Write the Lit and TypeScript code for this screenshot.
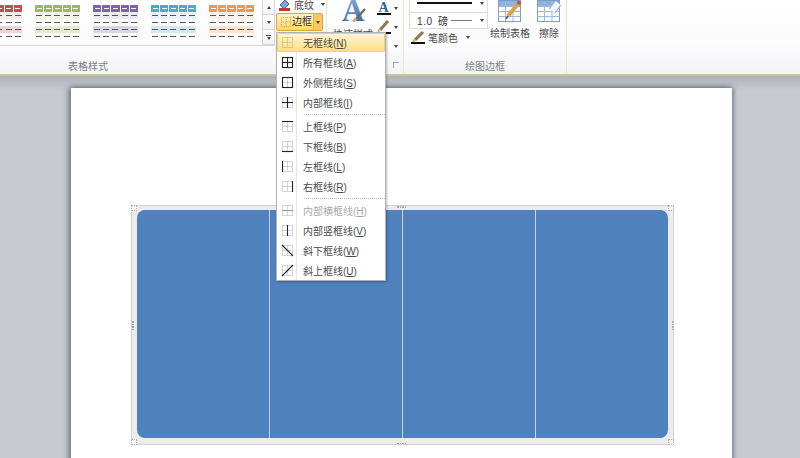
import { LitElement, html, css, svg } from "lit";
import { customElement } from "lit/decorators.js";

type Item = { label: string; key: string; lines: string[]; hot?: boolean; off?: boolean } | { sep: true };

const items: Item[] = [
  { label: "无框线", key: "N", lines: [], hot: true },
  { label: "所有框线", key: "A", lines: ["t", "b", "l", "r", "h", "v"] },
  { label: "外侧框线", key: "S", lines: ["t", "b", "l", "r"] },
  { label: "内部框线", key: "I", lines: ["h", "v"] },
  { sep: true },
  { label: "上框线", key: "P", lines: ["t"] },
  { label: "下框线", key: "B", lines: ["b"] },
  { label: "左框线", key: "L", lines: ["l"] },
  { label: "右框线", key: "R", lines: ["r"] },
  { sep: true },
  { label: "内部横框线", key: "H", lines: ["h"], off: true },
  { label: "内部竖框线", key: "V", lines: ["v"] },
  { label: "斜下框线", key: "W", lines: ["d"] },
  { label: "斜上框线", key: "U", lines: ["u"] },
];

const segs: Record<string, string> = {
  t: "M1 1.5H12", b: "M1 11.5H12", l: "M1.5 1V12", r: "M11.5 1V12",
  h: "M1 6.5H12", v: "M6.5 1V12", d: "M1 1L12 12", u: "M1 12L12 1",
};

const borderIcon = (lines: string[], faint: string, ink: string, size = 13) => svg`
  <svg width=${size} height=${size} viewBox="0 0 13 13" fill="none">
    <path d="M1.5 1.5H11.5V11.5H1.5ZM6.5 1.5V11.5M1.5 6.5H11.5" stroke=${faint} stroke-dasharray="1 1"/>
    ${lines.map((l) => svg`<path d=${segs[l]} stroke=${ink} stroke-width="1.1"/>`)}
  </svg>`;

const swatches = [
  { head: "#c0504d", band: "#ecd6d5", soft: "#f7ecec" },
  { head: "#9bbb59", band: "#e3ecd0", soft: "#f2f6e8" },
  { head: "#8064a2", band: "#dcd5e5", soft: "#eeeaf2" },
  { head: "#4bacc6", band: "#d3e9f0", soft: "#e9f4f8" },
  { head: "#f79646", band: "#fde3d0", soft: "#fef1e7" },
];

const tableIcon = (extra: unknown) => svg`
  <svg width="26" height="24" viewBox="0 0 26 24" fill="none">
    <rect x="1.5" y="1.5" width="22" height="21" fill="#fff" stroke="#7f9cbd"/>
    <rect x="2" y="2" width="21" height="5" fill="#8db3e2"/>
    <path d="M1.5 7.5H23.5M1.5 12.5H23.5M1.5 17.5H23.5M8.5 2V22M16 2V22" stroke="#a3b9d3"/>
    ${extra}
  </svg>`;

@customElement("app-root")
export class AppRoot extends LitElement {
  static styles = css`
    :host { display: block; width: 800px; height: 458px; overflow: hidden; position: relative;
      font-family: "Liberation Sans", "Noto Sans CJK SC", sans-serif; font-size: 10px; color: #4a4a4a; background: #c6c9ce; }
    .ribbon { display: flex; height: 74px; overflow: hidden; border-bottom: 2px solid #c6c99c;
      background: linear-gradient(#ffffff 0, #fbfbfc 45px, #f3f4f6 74px); }
    .group { display: flex; flex-direction: column; height: 74px; flex: none; border-right: 1px solid #e6e8cf; box-sizing: border-box; }
    .body { height: 59px; display: flex; flex: none; }
    .label { height: 15px; line-height: 15px; text-align: center; color: #7b7f86; }
    .g1 { width: 374px; margin-left: -99px; border-right: none; }
    .g1 .body { justify-content: flex-end; }
    .gallery { flex: none; height: 45px; border-bottom: 1px solid #d5d7db; width: 100%; display: flex; justify-content: flex-end; }
    .swatches { display: flex; gap: 13px; padding: 5px 8px 0 0; }
    .swatch { width: 45px; display: flex; flex-direction: column; }
    .cols { display: grid; grid-template-columns: repeat(5, 1fr); gap: 1px; }
    .head { display: flex; align-items: center; justify-content: center; height: 7px; }
    .head i { width: 5px; height: 1px; background: #fff; }
    .row { height: 7px; display: flex; align-items: center; justify-content: center; }
    .row i { width: 6px; height: 1.4px; background: #555; }
    .scroll { width: 11px; flex: none; display: flex; flex-direction: column; border-left: 1px solid #d5d7db; border-right: 1px solid #d5d7db; }
    .scroll div { flex: 1; border-bottom: 1px solid #d5d7db; display: flex; flex-direction: column; gap: 1px; align-items: center; justify-content: center; background: linear-gradient(#fff, #f1f2f4); }
    .scroll b { width: 5px; height: 1px; background: #444; }
    .tri { width: 0; height: 0; border-left: 2.5px solid transparent; border-right: 2.5px solid transparent; border-top: 3px solid #444; flex: none; }
    .tri.up { border-top: none; border-bottom: 3px solid #444; }
    .g2 { width: 52px; }
    .g2 .body { flex-direction: column; padding: 0 0 0 1px; box-sizing: border-box; }
    .cmd { display: flex; align-items: center; height: 17px; width: 47px; box-sizing: border-box; white-space: nowrap; }
    .cmd.top { margin-top: -4px; padding-left: 2px; gap: 3px; width: 50px; }
    .cmd.top .tri { margin-left: 4px; }
    .cmd.on { height: 18px; border: 1px solid #dfa63c; border-radius: 2px; background: linear-gradient(#fff3c4, #ffe79c 50%, #ffd765); padding-left: 3px; }
    .cmd.on .txt { width: 21px; flex: none; border-right: 1px solid #e3b45c; height: 16px; line-height: 15px; color: #333; }
    .cmd.on .drop { flex: 1; height: 16px; background: #fcc55f; display: flex; align-items: center; justify-content: center; }
    .g3 { width: 77px; position: relative; }
    .g3 .body { padding-left: 14px; gap: 5px; box-sizing: border-box; }
    .art { width: 31px; flex: none; height: 22px; display: block; }
    .quick { position: absolute; left: 6px; top: 26px; white-space: nowrap; }
    .mini { display: flex; flex-direction: column; flex: none; gap: 4px; }
    .mini div { display: flex; align-items: center; gap: 3px; height: 16px; }
    .mini div.short { height: 14px; }
    .mini svg { display: block; flex: none; }
    .gapfill { width: 14px; flex: none; }
    .launch { position: absolute; right: 4px; bottom: 6px; width: 5px; height: 5px; border-left: 1px solid #aaa; border-top: 1px solid #aaa; }
    .g4 { width: 163px; }
    .g4 .body { padding-left: 5px; gap: 2px; box-sizing: border-box; }
    .lines { width: 79px; flex: none; display: flex; flex-direction: column; }
    .combo { display: flex; align-items: center; width: 79px; height: 16px; border: 1px solid #dadce0; border-top: none; box-sizing: border-box; background: #fff; padding: 0 3px 0 7px; color: #333; white-space: nowrap; word-spacing: 2px; letter-spacing: .6px; }
    .combo.first { height: 13px; padding-bottom: 6px; }
    .combo .stroke { flex: 1; background: #111; height: 2px; margin-right: 8px; }
    .combo .thin { flex: 1; background: #777; height: 1px; margin: 0 8px 0 2px; }
    .pen { display: flex; align-items: center; gap: 3px; height: 17px; padding-left: 2px; white-space: nowrap; }
    .pen .tri { margin-left: 5px; }
    .tool { display: flex; flex-direction: column; align-items: center; flex: none; white-space: nowrap; margin-top: -1px; gap: 2px; }
    .tool.a { width: 40px; }
    .tool.b { width: 26px; margin-left: 4px; }
    .work { padding: 12px 0 0 71px; height: 382px; box-sizing: border-box; background: linear-gradient(#aeb2b6, #c6c9ce 14px); }
    .page { width: 661px; height: 380px; box-sizing: border-box; background: #fff; padding: 117px 58px 0 60px; box-shadow: -3px 0 5px rgba(90,95,105,.6), 2px 0 4px rgba(90,95,105,.5), 0 -2px 4px rgba(90,95,105,.35); }
    .frame { position: relative; height: 240px; box-sizing: border-box; padding: 4px 5px 6px; background: #ececec; border: 1px solid #d2d2d2; border-radius: 3px; }
    .table { display: grid; grid-template-columns: repeat(4, 1fr); gap: 1px; background: #c9d7ea; border-radius: 8px; overflow: hidden; height: 228px; }
    .table div { background: #4f81bd; }
    .dots { position: absolute; display: flex; gap: 1px; }
    .dots i { width: 1.5px; height: 1.5px; background: #a0a0a0; }
    .dots.top { top: 0; left: 265px; }
    .dots.bot { bottom: 0; left: 265px; }
    .dots.lt, .dots.rt { flex-direction: column; top: 115px; }
    .dots.lt { left: 0; }
    .dots.rt { right: 0; }
    .corner { position: absolute; width: 4px; height: 4px; border: 1px dotted #b0b0b0; background: #f7f7f7; }
    .corner.tl { left: -1px; top: -1px; }
    .corner.tr { right: -1px; top: -1px; }
    .corner.bl { left: -1px; bottom: -1px; }
    .corner.br { right: -1px; bottom: -1px; }
    .menu { position: absolute; left: 276px; top: 32px; width: 110px; box-sizing: border-box; border: 1px solid #b0b3b8; background: #fff; box-shadow: 1px 1px 2px rgba(0,0,0,.25);
      background-image: linear-gradient(#e4e6e9, #e4e6e9); background-size: 1px 100%; background-position: 19px 0; background-repeat: no-repeat; }
    .item { height: 20px; display: flex; align-items: center; color: #4a4a4a; white-space: nowrap; }
    .item .ic { width: 20px; display: flex; justify-content: center; flex: none; margin-right: 6px; }
    .item.hot { height: 19px; background: linear-gradient(#fff6d2, #ffe9a8 55%, #ffdc7d); box-shadow: inset 0 0 0 1px #f0cf80; border-radius: 2px; }
    .item.off { color: #aaaaaa; }
    .msep { height: 4px; display: flex; align-items: center; padding-left: 27px; }
    .msep i { flex: 1; border-top: 1px dotted #bbbdc2; }
  `;

  private swatch(s: (typeof swatches)[number]) {
    const cols = [0, 1, 2, 3, 4];
    const row = (bg: string) => html`<div class="row" style="background:${bg}"><div class="cols" style="width:100%">${cols.map(() => html`<div class="row"><i></i></div>`)}</div></div>`;
    return html`<div class="swatch">
      <div class="cols">${cols.map(() => html`<div class="head" style="background:${s.head}"><i></i></div>`)}</div>
      ${row(s.soft)}${row("#fff")}${row(s.band)}${row("#fff")}
    </div>`;
  }

  render() {
    return html`
      <div class="ribbon">
        <div class="group g1">
          <div class="body">
            <div class="gallery">
              <div class="swatches">${swatches.map((s) => this.swatch(s))}</div>
              <div class="scroll">
                <div><span class="tri up"></span></div>
                <div><span class="tri"></span></div>
                <div><b></b><span class="tri"></span></div>
              </div>
            </div>
          </div>
          <div class="label">表格样式</div>
        </div>
        <div class="group g2">
          <div class="body">
            <div class="cmd top">
              <svg width="13" height="13" viewBox="0 0 13 13"><path d="M2 7L7 2L11 6L6 11Z" fill="#7fa6d8" stroke="#3c66a0"/><rect x="1" y="10" width="11" height="3" fill="#c0392b"/></svg>
              <span>底纹</span><span class="tri"></span>
            </div>
            <div class="cmd on">
              ${borderIcon([], "#c59a4c", "#333", 12)}
              <span class="txt">边框</span>
              <span class="drop"><span class="tri"></span></span>
            </div>
          </div>
          <div class="label"></div>
        </div>
        <div class="group g3">
          <div class="body">
            <svg class="art" viewBox="0 0 31 22">
              <defs><linearGradient id="ag" x1="0" y1="0" x2="0" y2="1"><stop offset="0" stop-color="#8fb4e3"/><stop offset="1" stop-color="#2f5f9f"/></linearGradient></defs>
              <text x="1" y="21" font-family="Liberation Serif, serif" font-weight="700" font-size="31" fill="url(#ag)">A</text>
              <path d="M15 19L24 9" stroke="#6f6a5c" stroke-width="2.4"/><path d="M12 22L15 19" stroke="#c9b27a" stroke-width="3"/>
            </svg>
            <div class="mini">
              <div>
                <svg width="14" height="15" viewBox="0 0 14 15"><text x="1.5" y="11" font-family="Liberation Serif, serif" font-weight="700" font-size="14" fill="#2f5f9f">A</text><rect y="12" width="14" height="2" fill="#111"/></svg>
                <span class="tri"></span>
              </div>
              <div class="short">
                <svg width="14" height="14" viewBox="0 0 14 14"><path d="M3 10L11 1" stroke="#8a7a4a" stroke-width="3"/><path d="M1 12L3 9" stroke="#d8b34a" stroke-width="2"/><rect y="12" width="14" height="2" fill="#111"/></svg>
                <span class="tri"></span>
              </div>
              <div><span class="gapfill"></span><span class="tri"></span></div>
            </div>
          </div>
          <span class="quick">快速样式</span>
          <span class="launch"></span>
          <div class="label"></div>
        </div>
        <div class="group g4">
          <div class="body">
            <div class="lines">
              <div class="combo first"><span class="stroke"></span><span class="tri"></span></div>
              <div class="combo"><span>1.0 磅</span><span class="thin"></span><span class="tri"></span></div>
              <div class="pen">
                <svg width="14" height="13" viewBox="0 0 14 13"><path d="M4 9L12 1" stroke="#8a7a4a" stroke-width="3"/><path d="M2 11L4 8" stroke="#d8b34a" stroke-width="2"/><rect y="11" width="14" height="2" fill="#111"/></svg>
                <span>笔颜色</span><span class="tri"></span>
              </div>
            </div>
            <div class="tool a">
              ${tableIcon(svg`<path d="M11 17L21 5" stroke="#d9a53c" stroke-width="4"/><path d="M21 5L23 2.5" stroke="#c0504d" stroke-width="4"/><path d="M9 20L11 17" stroke="#555" stroke-width="1.5"/>`)}
              <span>绘制表格</span>
            </div>
            <div class="tool b">
              ${tableIcon(svg`<path d="M16 12L22 4" stroke="#9db3cc" stroke-width="8"/><path d="M16 12L22 4" stroke="#f2f5f9" stroke-width="6"/>`)}
              <span>擦除</span>
            </div>
          </div>
          <div class="label">绘图边框</div>
        </div>
      </div>
      <div class="work">
        <div class="page">
          <div class="frame">
            <div class="table"><div></div><div></div><div></div><div></div></div>
            ${["top", "bot", "lt", "rt"].map((p) => html`<span class="dots ${p}"><i></i><i></i><i></i><i></i></span>`)}
            ${["tl", "tr", "bl", "br"].map((p) => html`<span class="corner ${p}"></span>`)}
          </div>
        </div>
      </div>
      <div class="menu">
        ${items.map((it) => "sep" in it
          ? html`<div class="msep"><i></i></div>`
          : html`<div class="item ${it.hot ? "hot" : ""} ${it.off ? "off" : ""}">
              <span class="ic">${borderIcon(it.lines, it.hot ? "#c9a45e" : "#a8abb0", it.off ? "#9a9a9a" : "#222")}</span>
              <span>${it.label}(<u>${it.key}</u>)</span>
            </div>`)}
      </div>
    `;
  }
}
